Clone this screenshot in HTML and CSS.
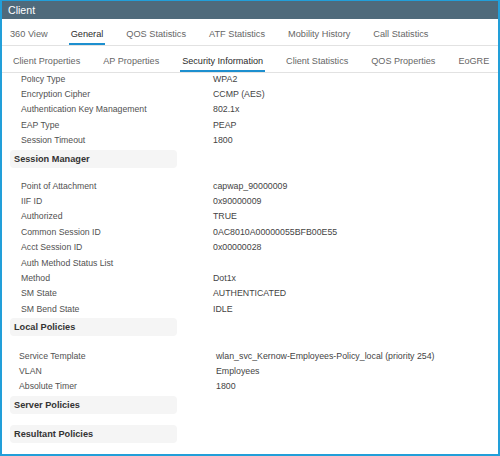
FILE: index.html
```html
<!DOCTYPE html>
<html lang="en">
<head>
    <meta charset="UTF-8">
    <meta name="viewport" content="width=device-width, initial-scale=1.0">
    <title>Client</title>
    <link rel="stylesheet" href="styles.css">
</head>
<body>
    <div class="window">
        <div class="title">Client</div>

        <div class="tabs main-tabs">
            <div class="tab">360 View</div>
            <div class="tab active">General</div>
            <div class="tab">QOS Statistics</div>
            <div class="tab">ATF Statistics</div>
            <div class="tab">Mobility History</div>
            <div class="tab">Call Statistics</div>
        </div>

        <div class="tabs sub-tabs">
            <div class="tab">Client Properties</div>
            <div class="tab">AP Properties</div>
            <div class="tab active">Security Information</div>
            <div class="tab">Client Statistics</div>
            <div class="tab">QOS Properties</div>
            <div class="tab">EoGRE</div>
        </div>

        <div class="content">
            <div class="scroll">
                <div class="rows">
                    <div class="row"><span class="label">Policy Type</span><span class="value">WPA2</span></div>
                    <div class="row"><span class="label">Encryption Cipher</span><span class="value">CCMP (AES)</span></div>
                    <div class="row"><span class="label">Authentication Key Management</span><span class="value">802.1x</span></div>
                    <div class="row"><span class="label">EAP Type</span><span class="value">PEAP</span></div>
                    <div class="row"><span class="label">Session Timeout</span><span class="value">1800</span></div>
                </div>

                <div class="section-title">Session Manager</div>
                <div class="rows">
                    <div class="row"><span class="label">Point of Attachment</span><span class="value">capwap_90000009</span></div>
                    <div class="row"><span class="label">IIF ID</span><span class="value">0x90000009</span></div>
                    <div class="row"><span class="label">Authorized</span><span class="value">TRUE</span></div>
                    <div class="row"><span class="label">Common Session ID</span><span class="value">0AC8010A00000055BFB00E55</span></div>
                    <div class="row"><span class="label">Acct Session ID</span><span class="value">0x00000028</span></div>
                    <div class="row"><span class="label">Auth Method Status List</span><span class="value"></span></div>
                    <div class="row"><span class="label">Method</span><span class="value">Dot1x</span></div>
                    <div class="row"><span class="label">SM State</span><span class="value">AUTHENTICATED</span></div>
                    <div class="row"><span class="label">SM Bend State</span><span class="value">IDLE</span></div>
                </div>

                <div class="section-title">Local Policies</div>
                <div class="rows policies">
                    <div class="row"><span class="label">Service Template</span><span class="value">wlan_svc_Kernow-Employees-Policy_local (priority 254)</span></div>
                    <div class="row"><span class="label">VLAN</span><span class="value">Employees</span></div>
                    <div class="row"><span class="label">Absolute Timer</span><span class="value">1800</span></div>
                </div>

                <div class="section-title">Server Policies</div>
                <div class="rows"></div>

                <div class="section-title">Resultant Policies</div>
            </div>
        </div>
    </div>
</body>
</html>
```

FILE: styles.css
```css
body {
    margin: 0;
    background-color: #fff;
    font-family: "Liberation Sans", Arial, sans-serif;
}

.window {
    width: 500px;
    height: 456px;
    box-sizing: border-box;
    border: 2px solid #229fd9;
    border-top-width: 1px;
    display: flex;
    flex-direction: column;
    overflow: hidden;
}

.title {
    height: 18px;
    line-height: 18px;
    padding-left: 6px;
    background-color: #4f6a7b;
    color: #fff;
    font-size: 10.6px;
}

.tabs {
    display: flex;
    height: 26px;
    border-bottom: 1px solid #e2e2e2;
    white-space: nowrap;
}

.tab {
    padding: 0 2px;
    line-height: 31px;
    font-size: 9.2px;
    color: #666;
    box-sizing: border-box;
    height: 26px;
}

.tab.active {
    color: #2b2b2b;
    border-bottom: 2px solid #1d8fcf;
}

.main-tabs {
    padding-left: 6px;
    gap: 19px;
}

.sub-tabs {
    padding-left: 9px;
    gap: 19px;
}

.sub-tabs .tab {
    font-size: 9.1px;
}

.content {
    flex: 1;
    margin-top: 3px;
    overflow: hidden;
}

.scroll {
    margin-top: -4.3px;
}

.row {
    display: flex;
    height: 15.4px;
    line-height: 15.4px;
    white-space: nowrap;
}

.label {
    width: 192px;
    padding-left: 19px;
    font-size: 8.7px;
    color: #515151;
}

.value {
    font-size: 8.8px;
    color: #444;
}

.policies {
    padding-top: 1.5px;
}

.policies .label {
    width: 197px;
    padding-left: 17px;
}

.section-title {
    width: 163px;
    height: 18px;
    line-height: 18px;
    margin: 1px 0 11px 8px;
    padding-left: 4px;
    background-color: #f5f5f5;
    border-radius: 4px;
    font-size: 9.2px;
    font-weight: bold;
    color: #333;
}
```
